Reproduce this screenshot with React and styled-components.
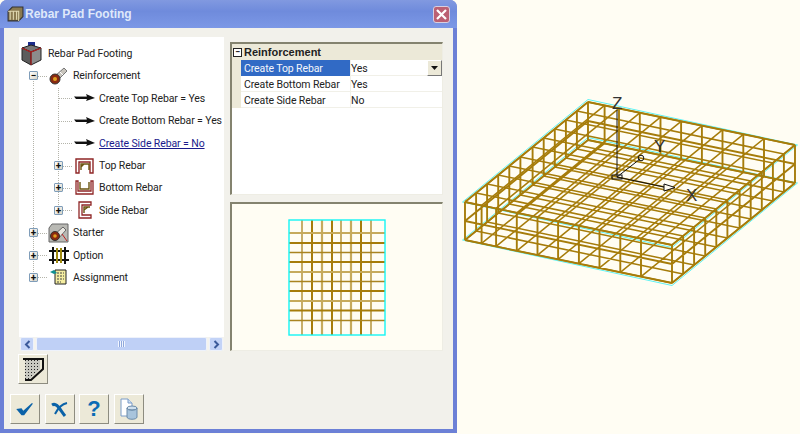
import React from 'react'
import styled, { createGlobalStyle } from 'styled-components'

const GOLD = '#a67c0a'
const CYAN = '#5ff2f2'

const GlobalStyle = createGlobalStyle`
   html, body {
      margin: 0;
      padding: 0;
      background: #fffdf3;
   }
   body {
      font-family: Roboto, "Liberation Sans", Arial, sans-serif;
      font-size: 10.5px;
      letter-spacing: -0.1px;
      color: #222;
   }
`

/* icons */
const CubeIcon = () => (
   <svg width="21" height="24" viewBox="0 0 21 24">
      <path d="M7 0h7v5H7z" fill="#1c2c8c" />
      <path d="M1 6l9-3 10 3-10 4z" fill="#777" stroke="#222" />
      <path d="M1 6l9 4v13l-9-5z" fill="#5c5c5c" stroke="#222" />
      <path d="M20 6l-10 4v13l10-5z" fill="#8c8c8c" stroke="#222" />
      <path d="M10 10v13M1 6l9 4 10-4" fill="none" stroke="#b02020" strokeWidth="1.2" />
   </svg>
)
const BarIcon = () => (
   <svg width="19" height="18" viewBox="0 0 19 18">
      <path d="M6 9L15 1l3 3-9 9z" fill="#c9c5bd" stroke="#777" />
      <path d="M11 5l4 4" stroke="#fff" />
      <circle cx="6" cy="12" r="5" fill="#8a2a10" stroke="#333" />
      <circle cx="6" cy="12" r="2" fill="#e0a020" />
   </svg>
)
const ArrowIcon = () => (
   <svg width="21" height="10" viewBox="0 0 21 10">
      <path d="M0 3.5h13L12 1l9 4-9 3 1-2H2z" fill="#111" />
      <path d="M2 3.5h10" stroke="#999" />
   </svg>
)
const TopIcon = () => (
   <svg width="19" height="16" viewBox="0 0 19 16">
      <path d="M1 15V1h17v14h-3V4H4v11z" fill="#fff" stroke="#8f2626" strokeWidth="1.4" />
      <path d="M6 12V6h8v6M6 9l3-3" fill="none" stroke="#6a5410" strokeWidth="1.4" />
   </svg>
)
const BottomIcon = () => (
   <svg width="19" height="15" viewBox="0 0 19 15">
      <path d="M1 1v13h17V1h-2v10H3V1z" fill="#fff" stroke="#8f2626" strokeWidth="1.3" />
      <path d="M5 2v7h9V2" fill="none" stroke="#6a5410" strokeWidth="1.4" />
   </svg>
)
const SideIcon = () => (
   <svg width="14" height="18" viewBox="0 0 14 18">
      <path d="M1 1h12v3H4v10h9v3H1z" fill="#fff" stroke="#8f2626" strokeWidth="1.3" />
      <path d="M12 6H6v6M6 9l4-3" fill="none" stroke="#6a5410" strokeWidth="1.4" />
   </svg>
)
const StarterIcon = () => (
   <svg width="21" height="20" viewBox="0 0 21 20">
      <path d="M4 1h16v18H1V5z" fill="#b9b9b4" stroke="#666" />
      <path d="M6 12l9-8 3 3-8 9z" fill="#e8e6e0" stroke="#666" />
      <circle cx="7" cy="13" r="4.5" fill="#8a2a10" stroke="#333" />
      <circle cx="7" cy="13" r="1.8" fill="#e0a020" />
      <path d="M14 11l5 7" stroke="#c02020" />
   </svg>
)
const OptionIcon = () => (
   <svg width="20" height="17" viewBox="0 0 20 17">
      <path d="M0 4h20M0 13h20M4 0v17M16 0v17" stroke="#111" strokeWidth="2" />
      <path d="M8 1v15M12 1v15" stroke="#a08a10" strokeWidth="2" />
   </svg>
)
const AssignIcon = () => (
   <svg width="17" height="16" viewBox="0 0 17 16">
      <path d="M5 1h11v14H5z" fill="#f4eda0" stroke="#222" />
      <path d="M7 4h7M7 7h7M7 10h7M7 13h4" stroke="#444" strokeDasharray="2 1" />
      <path d="M0 3l4-2 3 3-3 1z" fill="#109090" />
   </svg>
)

const ToolGlyph = () => (
   <svg width="22" height="24" viewBox="0 0 22 24">
      <defs>
         <pattern id="stipple" width="3" height="3" patternUnits="userSpaceOnUse">
            <rect width="3" height="3" fill="#c8c8c0" />
            <rect width="1" height="1" fill="#222" />
         </pattern>
      </defs>
      <path d="M3 3h15v9L8 22H3z" fill="url(#stipple)" />
      <path d="M1 2h20v10L9 23H3" fill="none" stroke="#111" strokeWidth="2" />
   </svg>
)
const CheckGlyph = () => (
   <svg width="18" height="14" viewBox="0 0 20 16">
      <path d="M0 8l6-1 2 3L18 1l1 1L9 15H6z" fill="#0a62a8" />
   </svg>
)
const CrossGlyph = () => (
   <svg width="17" height="15" viewBox="0 0 17 15">
      <path d="M1 3c5-3 8 5 13 11" fill="none" stroke="#0a62a8" strokeWidth="3" />
      <path d="M16 1C11 2 7 6 4 12" fill="none" stroke="#0a62a8" strokeWidth="2" />
   </svg>
)
const DocGlyph = () => (
   <svg width="18" height="22" viewBox="0 0 18 22">
      <path d="M1 1h7l4 4v13H1z" fill="#fff" stroke="#7a9cc8" />
      <path d="M8 1v4h4" fill="#cfe0f2" stroke="#7a9cc8" />
      <ellipse cx="12" cy="10" rx="5" ry="2" fill="#cfe0ee" stroke="#6a8aa8" />
      <path d="M7 10v9c0 3 10 3 10 0v-9c0 3-10 3-10 0z" fill="#a8c4dc" stroke="#6a8aa8" />
   </svg>
)

/* 3d wire model, page coordinates */
const L = [465, 202]
const F = [672, 245]
const B = [588, 102]
const H = 38
const project = (u, v, w) => [
   L[0] + u * (F[0] - L[0]) + v * (B[0] - L[0]),
   L[1] + u * (F[1] - L[1]) + v * (B[1] - L[1]) + w * H,
]
const US = [0, 0.08, 0.15, 0.25, 0.35, 0.45, 0.55, 0.65, 0.75, 0.85, 1]
const VS = [0, 0.09, 0.18, 0.27, 0.36, 0.45, 0.55, 0.64, 0.73, 0.82, 0.91, 1]

const seg = (a, b) => `M${a[0].toFixed(1)} ${a[1].toFixed(1)}L${b[0].toFixed(1)} ${b[1].toFixed(1)}`

const buildCage = () => {
   const parts = []
   ;[0, 1].forEach((w) => {
      US.forEach((u) => parts.push(seg(project(u, 0, w), project(u, 1, w))))
      VS.forEach((v) => parts.push(seg(project(0, v, w), project(1, v, w))))
   })
   return parts.join('')
}
const buildWalls = () => {
   const parts = []
   US.forEach((u) => {
      parts.push(seg(project(u, 0, 0), project(u, 0, 1)))
      parts.push(seg(project(u, 1, 0), project(u, 1, 1)))
   })
   VS.forEach((v) => {
      parts.push(seg(project(0, v, 0), project(0, v, 1)))
      parts.push(seg(project(1, v, 0), project(1, v, 1)))
   })
   ;[0, 0.5, 1].forEach((w) => {
      parts.push(seg(project(0, 0, w), project(1, 0, w)))
      parts.push(seg(project(1, 0, w), project(1, 1, w)))
      parts.push(seg(project(1, 1, w), project(0, 1, w)))
      parts.push(seg(project(0, 1, w), project(0, 0, w)))
   })
   return parts.join('')
}
const rim = (w, off) => {
   const pts = [
      [project(0, 0, w), [-off, 0]],
      [project(1, 0, w), [0, off]],
      [project(1, 1, w), [off, 0]],
      [project(0, 1, w), [0, -off]],
   ]
   return pts.map(([p, d]) => `${p[0] + d[0]},${p[1] + d[1]}`).join(' ')
}

const CAGE = buildCage()
const WALLS = buildWalls()

/* flat preview */
const PX = [
   [14, 'thin'], [24, 'bold'], [34, 'pale'], [44, 'bold'], [53, 'thin'],
   [63, 'pale'], [73, 'bold'], [83, 'thin'],
]
const PY = [
   [14, 'pale'], [24, 'bold'], [33.5, 'thin'], [43, 'bold'], [53, 'pale'], [62.5, 'thin'],
   [72, 'bold'], [82, 'pale'], [91.5, 'bold'], [101.5, 'thin'],
]
const STROKES = {
   thin: { stroke: '#a98420', width: 1.3 },
   bold: { stroke: '#a67c0a', width: 2 },
   pale: { stroke: '#c6aa5c', width: 2.2 },
}

const TREE = [
   { guides: [], Icon: CubeIcon, text: 'Rebar Pad Footing', root: true },
   { guides: ['minus'], Icon: BarIcon, text: 'Reinforcement' },
   { guides: ['line', 'elbow'], Icon: ArrowIcon, text: 'Create Top Rebar = Yes' },
   { guides: ['line', 'elbow'], Icon: ArrowIcon, text: 'Create Bottom Rebar = Yes' },
   { guides: ['line', 'elbow'], Icon: ArrowIcon, text: 'Create Side Rebar = No', link: true },
   { guides: ['line', 'plus'], Icon: TopIcon, text: 'Top Rebar' },
   { guides: ['line', 'plus'], Icon: BottomIcon, text: 'Bottom Rebar' },
   { guides: ['line', 'plusEnd'], Icon: SideIcon, text: 'Side Rebar' },
   { guides: ['plus'], Icon: StarterIcon, text: 'Starter' },
   { guides: ['plus'], Icon: OptionIcon, text: 'Option' },
   { guides: ['plusEnd'], Icon: AssignIcon, text: 'Assignment' },
]

const PROPS = [
   { label: 'Create Top Rebar', value: 'Yes', selected: true },
   { label: 'Create Bottom Rebar', value: 'Yes' },
   { label: 'Create Side Rebar', value: 'No' },
]

const Guide = ({ kind }) => (
   <GuideCell $kind={kind}>
      {kind === 'minus' && <Expander>−</Expander>}
      {(kind === 'plus' || kind === 'plusEnd') && <Expander>+</Expander>}
   </GuideCell>
)

const App = () => (
   <Page>
      <GlobalStyle />
      <Window>
         <TitleBar>
            <TitleIcon>
               <svg width="17" height="17" viewBox="0 0 16 16">
                  <path d="M1 5l4-4h10v9l-4 4H1z" fill="#8a7a50" stroke="#333" />
                  <path d="M3 5v8M6 5v8M9 5v8M1 5h10v9" fill="none" stroke="#e0d8b0" />
               </svg>
            </TitleIcon>
            <Title>Rebar Pad Footing</Title>
            <CloseButton>
               <svg width="11" height="11" viewBox="0 0 11 11">
                  <path d="M1 1l9 9M10 1l-9 9" stroke="#fff" strokeWidth="2.2" />
               </svg>
            </CloseButton>
         </TitleBar>
         <Body>
            <Panes>
               <TreeColumn>
                  <Tree>
                     {TREE.map((item) => (
                        <TreeRow key={item.text}>
                           {item.guides.map((g, i) => <Guide key={i} kind={g} />)}
                           <IconSlot $root={item.root}><item.Icon /></IconSlot>
                           <TreeText $link={item.link}>{item.text}</TreeText>
                        </TreeRow>
                     ))}
                  </Tree>
                  <ScrollBar>
                     <ScrollButton>
                        <svg width="7" height="9" viewBox="0 0 7 9"><path d="M5.5 1L2 4.5 5.5 8" fill="none" stroke="#3b5a9a" strokeWidth="2" /></svg>
                     </ScrollButton>
                     <ScrollThumb><Grip /></ScrollThumb>
                     <ScrollButton>
                        <svg width="7" height="9" viewBox="0 0 7 9"><path d="M1.5 1L5 4.5 1.5 8" fill="none" stroke="#3b5a9a" strokeWidth="2" /></svg>
                     </ScrollButton>
                  </ScrollBar>
               </TreeColumn>
               <SideColumn>
                  <PropertyGrid>
                     <SectionRow>
                        <SectionBox>−</SectionBox>
                        <SectionTitle>Reinforcement</SectionTitle>
                     </SectionRow>
                     {PROPS.map((p) => (
                        <PropRow key={p.label}>
                           <PropLabel $selected={p.selected}>{p.label}</PropLabel>
                           <PropValue>
                              {p.value}
                              {p.selected && (
                                 <DropButton>
                                    <svg width="7" height="4" viewBox="0 0 7 4"><path d="M0 0h7L3.5 4z" fill="#111" /></svg>
                                 </DropButton>
                              )}
                           </PropValue>
                        </PropRow>
                     ))}
                  </PropertyGrid>
                  <Preview>
                     <svg width="98" height="117" viewBox="0 0 98 117">
                        {PX.map(([x, k]) => (
                           <line key={x} x1={x} x2={x} y1="1" y2="116" stroke={STROKES[k].stroke} strokeWidth={STROKES[k].width} />
                        ))}
                        {PY.map(([y, k]) => (
                           <line key={y} x1="1" x2="97" y1={y} y2={y} stroke={STROKES[k].stroke} strokeWidth={STROKES[k].width} />
                        ))}
                        <rect x="1" y="1" width="96" height="115" fill="none" stroke="#14f4f4" strokeWidth="1.4" />
                     </svg>
                  </Preview>
               </SideColumn>
            </Panes>
            <ToolRow>
               <SquareButton><ToolGlyph /></SquareButton>
            </ToolRow>
            <ActionRow>
               <SquareButton><CheckGlyph /></SquareButton>
               <SquareButton><CrossGlyph /></SquareButton>
               <SquareButton><HelpMark>?</HelpMark></SquareButton>
               <SquareButton><DocGlyph /></SquareButton>
            </ActionRow>
         </Body>
      </Window>
      <Viewport>
         <svg width="343" height="434" viewBox="457 0 343 434">
            <polygon points={rim(1, 2.5)} fill="none" stroke={CYAN} strokeWidth="1" />
            <polygon points={rim(0, 2.5)} fill="none" stroke={CYAN} strokeWidth="1" />
            <path d={CAGE} fill="none" stroke={GOLD} strokeWidth="1.5" />
            <path d={WALLS} fill="none" stroke={GOLD} strokeWidth="1.9" />
            <g fill="none" stroke="#111" strokeWidth="1">
               <path d="M617 177V110" />
               <path d="M617 177L640 159" />
               <circle cx="641" cy="158" r="2.8" />
               <path d="M617 177L664 187" />
               <path d="M664 184l11 3.5-11 3.5z" fill="#fffdf3" />
               <rect x="612" y="175" width="10" height="4" />
               <path d="M660 152v-7" />
            </g>
            <AxisLabel x="612" y="109">Z</AxisLabel>
            <AxisLabel x="654" y="152">Y</AxisLabel>
            <AxisLabel x="686" y="201">X</AxisLabel>
         </svg>
      </Viewport>
   </Page>
)

const Page = styled.div`
   display: flex;
   width: 800px;
   height: 434px;
   overflow: hidden;
   background: #fffdf3;
`

const Window = styled.div`
   display: flex;
   flex-direction: column;
   width: 457px;
   height: 433px;
   flex: none;
   box-sizing: border-box;
   background: #6c80d6;
   border-radius: 7px 7px 0 0;
   padding: 0 4px 4px 4px;
`

const TitleBar = styled.div`
   display: flex;
   align-items: center;
   height: 28px;
   flex: none;
   margin: 0 -4px;
   padding: 0 7px;
   border-radius: 7px 7px 0 0;
   background: linear-gradient(to bottom, #8199e0 0%, #6f8bdc 40%, #7c98e6 100%);
`

const TitleIcon = styled.div`
   display: flex;
   width: 18px;
   flex: none;
`

const Title = styled.div`
   flex: 1;
   color: #dfe8fa;
   font-family: "Liberation Sans", Arial, sans-serif;
   font-weight: bold;
   font-size: 12px;
   letter-spacing: 0;
`

const CloseButton = styled.div`
   display: flex;
   align-items: center;
   justify-content: center;
   width: 17px;
   height: 17px;
   border: 1px solid #d8cfe0;
   border-radius: 3px;
   background: #bb6073;
   box-sizing: border-box;
`

const Body = styled.div`
   display: flex;
   flex-direction: column;
   flex: 1;
   background: #f2f1eb;
`

const Panes = styled.div`
   display: flex;
   gap: 6px;
   height: 314px;
   margin-top: 9px;
   padding: 0 10px 0 15px;
`

const TreeColumn = styled.div`
   display: flex;
   flex-direction: column;
   width: 205px;
   flex: none;
`

const Tree = styled.div`
   flex: 1;
   background: #fff;
   padding-top: 5.4px;
   padding-left: 2px;
`

const TreeRow = styled.div`
   display: flex;
   align-items: center;
   height: 22.4px;
`

const dotted = 'rgba(0,0,0,0) 0 50%, #b4b4aa 50% 100%'

const GuideCell = styled.div`
   position: relative;
   display: flex;
   align-items: center;
   justify-content: center;
   width: 25px;
   height: 100%;
   flex: none;

   &:nth-child(2) {
      width: 26px;
      justify-content: flex-start;
      padding-left: 8px;
      box-sizing: border-box;
   }

   &::before {
      content: '';
      position: absolute;
      left: 12px;
      top: ${(p) => (p.$kind === 'minus' ? '50%' : '0')};
      width: 1px;
      height: ${(p) => (p.$kind === 'plusEnd' || p.$kind === 'minus' ? '50%' : '100%')};
      background: repeating-linear-gradient(to bottom, ${dotted}) 0 0 / 1px 2px;
   }

   &::after {
      content: '';
      display: ${(p) => (p.$kind === 'line' ? 'none' : 'block')};
      position: absolute;
      left: 12px;
      top: 50%;
      width: 14px;
      height: 1px;
      background: repeating-linear-gradient(to right, ${dotted}) 0 0 / 2px 1px;
   }
`

const Expander = styled.div`
   position: relative;
   z-index: 1;
   display: flex;
   align-items: center;
   justify-content: center;
   width: 9px;
   height: 9px;
   box-sizing: border-box;
   border: 1px solid #7f9db9;
   border-radius: 1px;
   background: linear-gradient(135deg, #fff, #d8d4c6);
   color: #111;
   font-size: 10px;
   line-height: 7px;
   font-weight: bold;
`

const IconSlot = styled.div`
   display: flex;
   align-items: center;
   justify-content: ${(p) => (p.$root ? 'flex-start' : 'center')};
   width: ${(p) => (p.$root ? '24px' : '23px')};
   flex: none;
   margin-left: ${(p) => (p.$root ? '0' : '1px')};
   margin-right: 3px;
`

const TreeText = styled.span`
   white-space: nowrap;
   color: ${(p) => (p.$link ? '#1a1a8c' : '#222')};
   text-decoration: ${(p) => (p.$link ? 'underline' : 'none')};
`

const ScrollBar = styled.div`
   display: flex;
   align-items: center;
   height: 14px;
   flex: none;
   padding: 0 1px;
   gap: 2px;
   background: #f4f3ee;
`

const ScrollButton = styled.div`
   display: flex;
   align-items: center;
   justify-content: center;
   width: 14px;
   height: 14px;
   flex: none;
   box-sizing: border-box;
   border: 1px solid #eef2fb;
   border-radius: 2px;
   background: #c3d3f7;
`

const ScrollThumb = styled.div`
   display: flex;
   align-items: center;
   justify-content: center;
   flex: 1;
   height: 14px;
   box-sizing: border-box;
   border: 1px solid #eef2fb;
   border-radius: 2px;
   background: #bfd0f6;
`

const Grip = styled.div`
   width: 7px;
   height: 6px;
   background: repeating-linear-gradient(to right, #f2f6ff 0 1px, #8fa8dc 1px 2px);
`

const SideColumn = styled.div`
   display: flex;
   flex-direction: column;
   flex: 1;
   margin-top: 5px;
   gap: 7px;
`

const sunken = `
   box-sizing: border-box;
   border-top: 2px solid #84836f;
   border-left: 2px solid #84836f;
   border-right: 1px solid #eeede4;
   border-bottom: 1px solid #eeede4;
`

const PropertyGrid = styled.div`
   ${sunken}
   height: 153px;
   flex: none;
   background: #fff;
`

const SectionRow = styled.div`
   display: flex;
   align-items: center;
   height: 16px;
   background: #ece9d8;
`

const SectionBox = styled.div`
   display: flex;
   align-items: center;
   justify-content: center;
   width: 9px;
   height: 9px;
   margin-left: 1px;
   box-sizing: border-box;
   border: 1px solid #222;
   background: #fff;
   color: #111;
   font-size: 9px;
   line-height: 7px;
   font-weight: bold;
`

const SectionTitle = styled.span`
   margin-left: 2px;
   font-family: "Liberation Sans", Arial, sans-serif;
   font-weight: bold;
   font-size: 11px;
   letter-spacing: 0;
   color: #222;
`

const PropRow = styled.div`
   display: flex;
   align-items: center;
   height: 16px;
   border-left: 9px solid #ece9d8;
   box-sizing: border-box;
   box-shadow: inset 0 -1px 0 #f1f0e8;
`

const PropLabel = styled.div`
   display: flex;
   align-items: center;
   width: 110px;
   height: 100%;
   flex: none;
   padding-left: 3px;
   box-sizing: border-box;
   white-space: nowrap;
   background: ${(p) => (p.$selected ? '#316ac5' : 'transparent')};
   color: ${(p) => (p.$selected ? '#f4f6fb' : '#222')};
   border-right: 1px solid #f1f0e8;
`

const PropValue = styled.div`
   display: flex;
   align-items: center;
   justify-content: space-between;
   flex: 1;
   height: 100%;
   color: #222;
`

const DropButton = styled.div`
   display: flex;
   align-items: center;
   justify-content: center;
   width: 15px;
   height: 16px;
   box-sizing: border-box;
   background: #ece9d8;
   border-top: 1px solid #fff;
   border-left: 1px solid #fff;
   border-right: 1px solid #777;
   border-bottom: 1px solid #777;
`

const Preview = styled.div`
   ${sunken}
   display: flex;
   align-items: center;
   justify-content: center;
   flex: 1;
   background: #fffdf3;
`

const ToolRow = styled.div`
   display: flex;
   margin-top: 3px;
   padding-left: 14px;
`

const ActionRow = styled.div`
   display: flex;
   gap: 4.5px;
   margin-top: 10px;
   padding-left: 6px;
`

const SquareButton = styled.div`
   display: flex;
   align-items: center;
   justify-content: center;
   width: 30px;
   height: 30px;
   box-sizing: border-box;
   background: #ece9d8;
   border-top: 1px solid #fff;
   border-left: 1px solid #fff;
   border-right: 1px solid #8d8c80;
   border-bottom: 1px solid #8d8c80;
`

const HelpMark = styled.span`
   font-family: "Liberation Sans", Arial, sans-serif;
   font-size: 22px;
   font-weight: bold;
   color: #0a6cb5;
   line-height: 1;
`

const Viewport = styled.div`
   display: flex;
   flex: 1;
   background: #fffdf3;
`

const AxisLabel = styled.text`
   font-family: "Liberation Sans", Arial, sans-serif;
   font-size: 17px;
   letter-spacing: 0;
   fill: #333;
`

export default App
